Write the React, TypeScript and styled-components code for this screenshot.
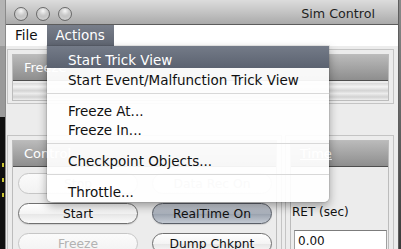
import styled, { createGlobalStyle } from "styled-components";

const GlobalStyle = createGlobalStyle`
  html, body {
    margin: 0;
    padding: 0;
    background: #4a4a4a;
  }
  body {
    font-family: "DejaVu Sans", "Liberation Sans", sans-serif;
  }
`;

export default function App() {
  return (
    <>
      <GlobalStyle />
      <Screen>
        <Desktop>
          <Mark />
          <Mark />
          <Mark />
        </Desktop>
        <Window>
          <TitleBar>
            <Lights>
              <Light />
              <Light />
              <Light />
            </Lights>
            <Title>Sim Control</Title>
          </TitleBar>
          <MenuBar>
            <MenuTitle>File</MenuTitle>
            <MenuTitle $open>Actions</MenuTitle>
            <DropMenu>
              <MenuItem $active>Start Trick View</MenuItem>
              <MenuItem>Start Event/Malfunction Trick View</MenuItem>
              <Separator />
              <MenuItem>Freeze At...</MenuItem>
              <MenuItem>Freeze In...</MenuItem>
              <Separator />
              <MenuItem>Checkpoint Objects...</MenuItem>
              <Separator />
              <MenuItem>Throttle...</MenuItem>
            </DropMenu>
          </MenuBar>
          <Content>
            <Panel>
              <PanelBox>
                <PanelHeader>Freeze</PanelHeader>
                <ProgressTrack />
              </PanelBox>
            </Panel>
            <Row>
              <Panel $width={275}>
                <PanelBox>
                  <PanelHeader>Control</PanelHeader>
                  <ButtonGrid>
                    <PillButton disabled>Stop</PillButton>
                    <PillButton disabled>Data Rec On</PillButton>
                    <PillButton>Start</PillButton>
                    <PillButton $pressed>RealTime On</PillButton>
                    <PillButton disabled>Freeze</PillButton>
                    <PillButton>Dump Chkpnt</PillButton>
                  </ButtonGrid>
                </PanelBox>
              </Panel>
              <Panel $width={109}>
                <PanelBox>
                  <PanelHeader $link>Time</PanelHeader>
                  <TimeBody>
                    <FieldLabel>RET (sec)</FieldLabel>
                    <TextField>0.00</TextField>
                  </TimeBody>
                </PanelBox>
              </Panel>
            </Row>
          </Content>
        </Window>
        <RightEdge />
      </Screen>
    </>
  );
}

const Screen = styled.div`
  width: 401px;
  height: 249px;
  display: flex;
  overflow: hidden;
`;

const Desktop = styled.div`
  width: 5px;
  flex-shrink: 0;
  display: flex;
  flex-direction: column;
  gap: 11px;
  padding-top: 163px;
  box-sizing: border-box;
  background: linear-gradient(#b4b4b4 0 46px, #9a9a9a 46px 117px, #101010 117px);
`;

const Mark = styled.div`
  width: 2px;
  height: 4px;
  margin-left: 2px;
  flex-shrink: 0;
  background: #c9c230;
`;

const Window = styled.div`
  width: 394px;
  flex-shrink: 0;
  display: flex;
  flex-direction: column;
  border-left: 1px solid #8a8a8a;
  border-right: 1px solid #5e5e5e;
  box-sizing: border-box;
  background: #ececec;
`;

const TitleBar = styled.div`
  height: 25px;
  flex-shrink: 0;
  box-sizing: border-box;
  padding: 3px 23px 0 8px;
  display: flex;
  align-items: center;
  background: linear-gradient(#dcdcdc, #c4c4c4 50%, #aaaaaa);
  border-bottom: 1px solid #5c5c5c;
`;

const Lights = styled.div`
  display: flex;
  gap: 8px;
`;

const Light = styled.div`
  width: 14px;
  height: 14px;
  border-radius: 50%;
  box-sizing: border-box;
  border: 1px solid #6a6a6a;
  background: radial-gradient(circle at 50% 25%, #f6f6f6 0, #c4c4c4 45%, #8c8c8c 100%);
  box-shadow: inset 0 -2px 3px rgba(255, 255, 255, 0.55);
`;

const Title = styled.div`
  margin-left: auto;
  font-size: 12.7px;
  color: #1e1e1e;
`;

const MenuBar = styled.div`
  position: relative;
  height: 21px;
  flex-shrink: 0;
  display: flex;
  background: #ffffff;
  z-index: 2;
`;

const MenuTitle = styled.div<{ $open?: boolean }>`
  padding: 0 9px;
  font-size: 13.5px;
  line-height: 21px;
  color: ${(p) => (p.$open ? "#ffffff" : "#111111")};
  background: ${(p) => (p.$open ? "linear-gradient(#787e8a, #5f6571)" : "transparent")};
`;

const DropMenu = styled.div`
  position: absolute;
  top: 100%;
  left: 41px;
  width: 282px;
  padding: 1px 0 3px;
  background: rgba(255, 255, 255, 0.93);
  border-radius: 0 0 5px 5px;
  box-shadow: 0 4px 10px rgba(0, 0, 0, 0.35), 0 0 0 1px rgba(0, 0, 0, 0.08);
`;

const MenuItem = styled.div<{ $active?: boolean }>`
  height: 19px;
  box-sizing: border-box;
  padding: 3px 0 0 21px;
  line-height: 18px;
  font-size: 13.5px;
  white-space: nowrap;
  color: ${(p) => (p.$active ? "#ffffff" : "#111111")};
  background: ${(p) => (p.$active ? "linear-gradient(#747b88, #5b6270)" : "transparent")};

  &:first-child {
    height: 22px;
    padding-top: 5px;
    margin-top: -1px;
  }
`;

const Separator = styled.div`
  height: 1px;
  margin: 6px 0 5px;
  background: #d8d8d8;
`;

const Content = styled.div`
  flex: 1;
  min-height: 0;
  padding: 3px 4px 0 1px;
  display: flex;
  flex-direction: column;
`;

const Panel = styled.div<{ $width?: number }>`
  width: ${(p) => (p.$width ? `${p.$width}px` : "auto")};
  box-sizing: border-box;
  padding: 4px 4px 2px;
  border: 1px solid #c4c4c4;
  flex-shrink: 0;
`;

const PanelBox = styled.div`
  border: 1px solid #bcbcbc;
  box-sizing: border-box;
`;

const PanelHeader = styled.div<{ $link?: boolean }>`
  height: 25px;
  line-height: 25px;
  padding-left: ${(p) => (p.$link ? "9px" : "11px")};
  font-size: 13px;
  color: #ffffff;
  text-decoration: ${(p) => (p.$link ? "underline" : "none")};
  background: linear-gradient(#bababa, #8e8e8e);
  border-bottom: 1px solid #4e4e4e;
`;

const ProgressTrack = styled.div`
  height: 17px;
  margin-top: 2px;
  background: linear-gradient(#d8d8d8, #f3f3f3 22%, #d4d4d4 45%, #ececec 62%, #d2d2d2 82%, #eeeeee);
`;

const Row = styled.div`
  margin-top: 31px;
  display: flex;
  gap: 3px;
  flex-shrink: 0;
`;

const ButtonGrid = styled.div`
  display: grid;
  grid-template-columns: 120px 120px;
  grid-auto-rows: 21px;
  column-gap: 14px;
  row-gap: 9px;
  padding: 6px 0 10px 5px;
`;

const PillButton = styled.button<{ $pressed?: boolean }>`
  margin: 0;
  padding: 0;
  border-radius: 11px;
  font-family: "DejaVu Sans", "Liberation Sans", sans-serif;
  font-size: 12.3px;
  color: #111111;
  border: 1px solid ${(p) => (p.$pressed ? "#5a5f68" : "#707070")};
  background: ${(p) =>
    p.$pressed
      ? "linear-gradient(#c9ced6, #aab1bc 50%, #9aa2ae 51%, #c3c9d2)"
      : "linear-gradient(#ffffff, #f4f4f4 50%, #e6e6e6 51%, #fafafa)"};
  box-shadow: 0 1px 1px rgba(0, 0, 0, 0.12);

  &:disabled {
    color: #b2b2b2;
    border-color: #c6c6c6;
    background: linear-gradient(#fbfbfb, #f2f2f2);
    box-shadow: none;
  }
`;

const TimeBody = styled.div`
  display: flex;
  flex-direction: column;
  padding: 38px 0 10px 1px;
`;

const FieldLabel = styled.div`
  font-size: 12px;
  line-height: 15px;
  color: #111111;
`;

const TextField = styled.div`
  margin: 10px 0 0 2px;
  width: 93px;
  height: 22px;
  box-sizing: border-box;
  padding-left: 3px;
  line-height: 20px;
  font-size: 12px;
  color: #111111;
  background: #ffffff;
  border: 1px solid #a0a0a0;
  border-top-color: #7c7c7c;
`;

const RightEdge = styled.div`
  flex: 1;
  background: linear-gradient(#8a8a8a, #3a3a3a);
`;
